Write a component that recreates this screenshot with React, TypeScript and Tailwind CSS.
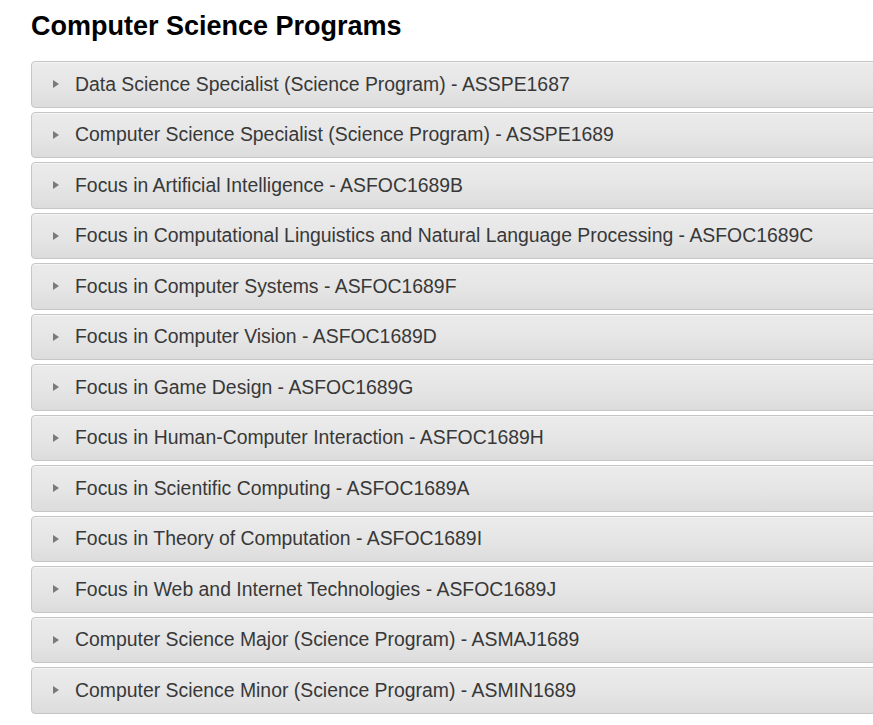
import React from 'react';

const programs = [
  'Data Science Specialist (Science Program) - ASSPE1687',
  'Computer Science Specialist (Science Program) - ASSPE1689',
  'Focus in Artificial Intelligence - ASFOC1689B',
  'Focus in Computational Linguistics and Natural Language Processing - ASFOC1689C',
  'Focus in Computer Systems - ASFOC1689F',
  'Focus in Computer Vision - ASFOC1689D',
  'Focus in Game Design - ASFOC1689G',
  'Focus in Human-Computer Interaction - ASFOC1689H',
  'Focus in Scientific Computing - ASFOC1689A',
  'Focus in Theory of Computation - ASFOC1689I',
  'Focus in Web and Internet Technologies - ASFOC1689J',
  'Computer Science Major (Science Program) - ASMAJ1689',
  'Computer Science Minor (Science Program) - ASMIN1689',
];

const ProgramRow = ({ title }: { title: string }) => (
  <div className="flex h-[46.5px] items-center rounded-[4px] border border-[#c6c6c6] bg-gradient-to-b from-[#ebebeb] via-[#e6e6e6] to-[#dcdcdc] pl-[21px] shadow-[inset_0_1px_0_#f4f4f4]">
    <span className="mr-[16px] inline-block h-0 w-0 border-y-[4.5px] border-l-[6px] border-y-transparent border-l-[#7a7a7a]" />
    <span className="whitespace-nowrap text-[19.4px] text-[#383838]">{title}</span>
  </div>
);

export default function App() {
  return (
    <div className="min-h-screen overflow-hidden bg-white pl-[31px] pt-[9px] font-['Liberation_Sans',Arial,sans-serif]">
      <h1 className="mb-[18px] text-[27px] font-bold leading-[34px] text-black">Computer Science Programs</h1>
      <div className="-mr-[20px] flex flex-col gap-[4px]">
        {programs.map((p) => (
          <ProgramRow key={p} title={p} />
        ))}
      </div>
    </div>
  );
}
